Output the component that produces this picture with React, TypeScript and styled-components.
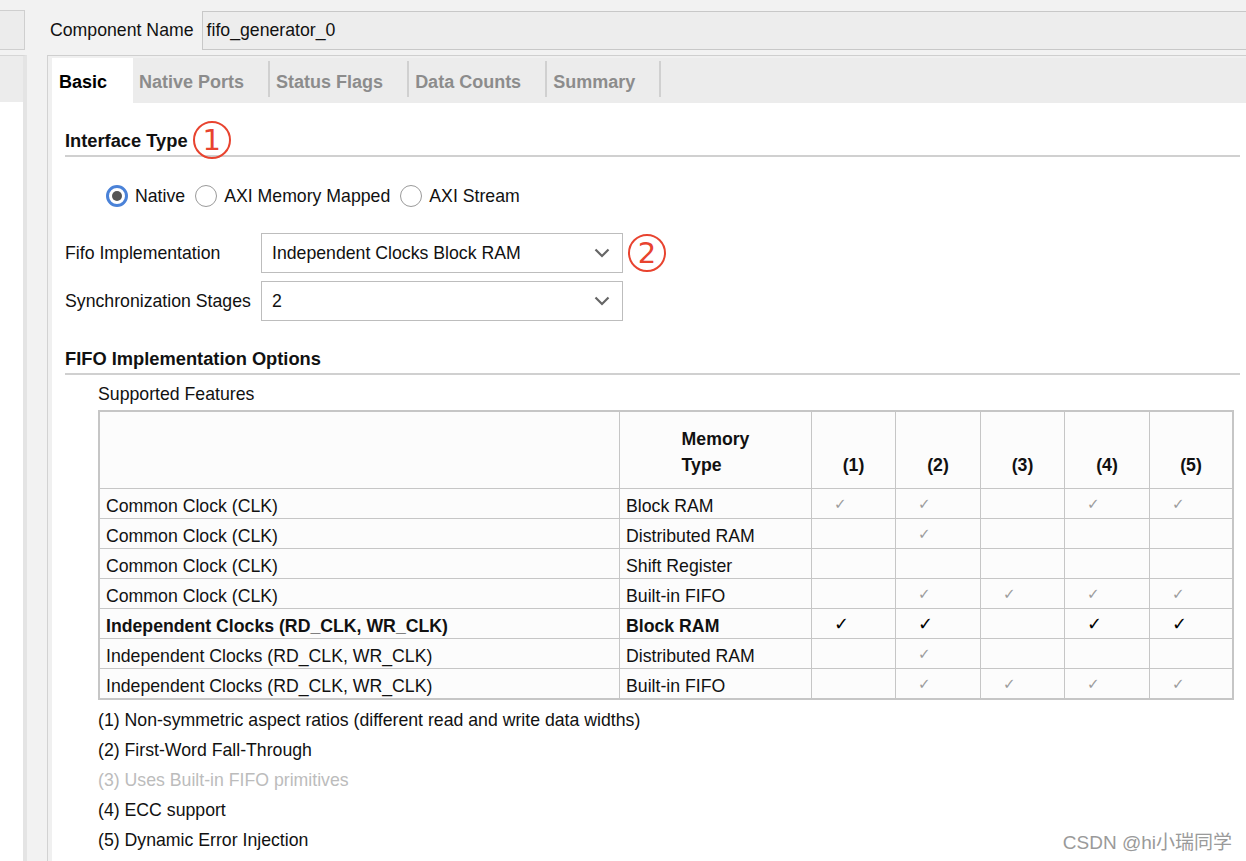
import React from 'react'
import styled, { createGlobalStyle } from 'styled-components'

const GlobalStyle = createGlobalStyle`
  html, body {
    margin: 0;
    padding: 0;
    background: #f2f2f2;
    font-family: "Liberation Sans", Arial, sans-serif;
    color: #111;
  }
`

const Page = styled.div`
  display: flex;
  height: 861px;
  overflow: hidden;
  position: relative;
`

const LeftStrip = styled.div`
  width: 27px;
  display: flex;
  flex-direction: column;
  padding-top: 10px;
  box-sizing: border-box;
`

const LeftTopBox = styled.div`
  height: 40px;
  width: 25px;
  box-sizing: border-box;
  background: #ececec;
  border: 1px solid #cfcfcf;
  border-left: none;
`

const LeftPanel = styled.div`
  flex: 1;
  margin-top: 5px;
  display: flex;
  flex-direction: column;
  border-top: 1px solid #d6d6d6;
  border-right: 4px solid #e4e4e4;
`

const LeftPanelHead = styled.div`
  height: 46px;
  background: #ececec;
`

const LeftPanelBody = styled.div`
  flex: 1;
  background: #fff;
`

const Main = styled.div`
  flex: 1;
  margin-left: 20px;
  display: flex;
  flex-direction: column;
  min-width: 0;
`

const NameRow = styled.div`
  display: flex;
  align-items: center;
  gap: 8px;
  margin-top: 11px;
  padding-left: 3px;
`

const NameLabel = styled.span`
  font-size: 17.7px;
`

const NameInput = styled.div`
  flex: 1;
  height: 39px;
  box-sizing: border-box;
  background: #ededed;
  border: 1px solid #c8c8c8;
  border-right: none;
  display: flex;
  align-items: center;
  padding-left: 4px;
  font-size: 17.7px;
`

const TabPanel = styled.div`
  flex: 1;
  margin-top: 5px;
  border-top: 1px solid #cfcfcf;
  border-left: 1px solid #d2d2d2;
  padding: 2px 0 0 4px;
  background: #f0f0f0;
  display: flex;
  flex-direction: column;
`

const TabBar = styled.div`
  display: flex;
  height: 45px;
  background: #ececec;
`

const Tab = styled.div<{ active?: boolean }>`
  display: flex;
  align-items: center;
  padding: 3px 26px 0 ${p => (p.active ? 7 : 6)}px;
  font-size: 18px;
  font-weight: bold;
  color: ${p => (p.active ? '#000' : '#8c8c8c')};
  background: ${p => (p.active ? '#fff' : 'transparent')};
  position: relative;
  ${p =>
    !p.active &&
    `
    &::after {
      content: '';
      position: absolute;
      right: 0;
      top: 3px;
      bottom: 6px;
      width: 2px;
      background: #d0d0d0;
    }
  `}
`

const Content = styled.div`
  flex: 1;
  background: #fff;
  padding: 0 6px 0 13px;
`

const HeadingRow = styled.div<{ top: number }>`
  display: flex;
  align-items: flex-end;
  height: 36px;
  margin-top: ${p => p.top}px;
  padding-bottom: 3px;
  box-sizing: content-box;
  border-bottom: 2px solid #d0d0d0;
`

const Heading = styled.span`
  font-size: 18.3px;
  font-weight: bold;
  line-height: 22px;
`

const Marker = styled.span<{ drop?: number; left?: number }>`
  width: 34px;
  height: 34px;
  border: 2px solid #e8432f;
  border-radius: 50%;
  color: #e8432f;
  display: inline-flex;
  align-items: center;
  justify-content: center;
  font-size: 29px;
  font-family: "DejaVu Sans", sans-serif;
  line-height: 1;
  margin-bottom: ${p => p.drop ?? 0}px;
  margin-left: ${p => p.left ?? 0}px;
  flex: none;
`

const RadioRow = styled.div`
  display: flex;
  align-items: center;
  gap: 10px;
  margin-top: 27px;
  padding-left: 41px;
  height: 24px;
`

const RadioItem = styled.label`
  display: flex;
  align-items: center;
  gap: 7px;
  font-size: 17.7px;
`

const RadioDot = styled.span<{ checked?: boolean }>`
  width: 22px;
  height: 22px;
  box-sizing: border-box;
  border-radius: 50%;
  background: #fff;
  border: ${p => (p.checked ? '3px solid #4a82d8' : '1px solid #9a9a9a')};
  display: inline-flex;
  align-items: center;
  justify-content: center;
  &::after {
    content: '';
    display: ${p => (p.checked ? 'block' : 'none')};
    width: 10px;
    height: 10px;
    border-radius: 50%;
    background: #555;
  }
`

const FormRow = styled.div<{ top: number }>`
  display: flex;
  align-items: center;
  margin-top: ${p => p.top}px;
  gap: 5px;
`

const FormLabel = styled.span`
  width: 191px;
  font-size: 17.7px;
`

const Select = styled.div`
  width: 362px;
  height: 40px;
  box-sizing: border-box;
  border: 1px solid #bdbdbd;
  background: #fff;
  display: flex;
  align-items: center;
  justify-content: space-between;
  padding: 0 12px 0 10px;
  font-size: 17.7px;
`

const SubTitle = styled.div`
  margin-top: 8px;
  padding-left: 33px;
  font-size: 17.7px;
  line-height: 22px;
`

const Table = styled.table`
  margin: 5px 0 0 33px;
  border-collapse: collapse;
  border: 2px solid #c6c6c6;
  background: #fcfcfc;
  table-layout: fixed;
  font-size: 17.7px;
`

const HeadCell = styled.th<{ w: number }>`
  width: ${p => p.w}px;
  height: 66px;
  border: 1px solid #c6c6c6;
  font-weight: bold;
  vertical-align: bottom;
  padding: 0 0 10px;
  text-align: center;
  line-height: 26px;
`

const StackedHead = styled.span`
  display: inline-block;
  text-align: left;
`

const Cell = styled.td<{ bold?: boolean }>`
  height: 24px;
  border: 1px solid #c6c6c6;
  padding: 5px 0 0 6px;
  font-weight: ${p => (p.bold ? 'bold' : 'normal')};
  white-space: nowrap;
  overflow: hidden;
`

const CheckCell = styled.td`
  height: 29px;
  border: 1px solid #c6c6c6;
  padding: 0 0 0 22px;
`

const Check = styled.span<{ strong?: boolean }>`
  font-family: "DejaVu Sans", sans-serif;
  font-size: ${p => (p.strong ? 18 : 15)}px;
  color: ${p => (p.strong ? '#000' : '#9c9c9c')};
  font-weight: ${p => (p.strong ? 'bold' : 'normal')};
`

const Notes = styled.div`
  margin-top: 5px;
  padding-left: 33px;
  display: flex;
  flex-direction: column;
`

const Note = styled.div<{ muted?: boolean }>`
  font-size: 17.7px;
  line-height: 30px;
  color: ${p => (p.muted ? '#bcbcbc' : '#111')};
`

const Watermark = styled.div`
  position: absolute;
  right: 14px;
  bottom: 7px;
  font-size: 19px;
  color: #9a9a9a;
  font-family: "Liberation Sans", "Noto Sans CJK SC", sans-serif;
`

const Chevron = () => (
  <svg width="16" height="10" viewBox="0 0 16 10">
    <path d="M1.5 1.5 L8 8 L14.5 1.5" fill="none" stroke="#666" strokeWidth="2.2" />
  </svg>
)

type Row = { clock: string; mem: string; bold?: boolean; checks: boolean[] }

const rows: Row[] = [
  { clock: 'Common Clock (CLK)', mem: 'Block RAM', checks: [true, true, false, true, true] },
  { clock: 'Common Clock (CLK)', mem: 'Distributed RAM', checks: [false, true, false, false, false] },
  { clock: 'Common Clock (CLK)', mem: 'Shift Register', checks: [false, false, false, false, false] },
  { clock: 'Common Clock (CLK)', mem: 'Built-in FIFO', checks: [false, true, true, true, true] },
  { clock: 'Independent Clocks (RD_CLK, WR_CLK)', mem: 'Block RAM', bold: true, checks: [true, true, false, true, true] },
  { clock: 'Independent Clocks (RD_CLK, WR_CLK)', mem: 'Distributed RAM', checks: [false, true, false, false, false] },
  { clock: 'Independent Clocks (RD_CLK, WR_CLK)', mem: 'Built-in FIFO', checks: [false, true, true, true, true] },
]

const featureCols = [83, 84, 83, 84, 82]

const tabs = ['Basic', 'Native Ports', 'Status Flags', 'Data Counts', 'Summary']

export default function App() {
  return (
    <Page>
      <GlobalStyle />
      <LeftStrip>
        <LeftTopBox />
        <LeftPanel>
          <LeftPanelHead />
          <LeftPanelBody />
        </LeftPanel>
      </LeftStrip>

      <Main>
        <NameRow>
          <NameLabel>Component Name</NameLabel>
          <NameInput>fifo_generator_0</NameInput>
        </NameRow>

        <TabPanel>
          <TabBar>
            {tabs.map((t, i) => (
              <Tab key={t} active={i === 0}>{t}</Tab>
            ))}
          </TabBar>

          <Content>
            <HeadingRow top={13}>
              <Heading>Interface Type</Heading>
              <Marker drop={-7} left={5}>1</Marker>
            </HeadingRow>

            <RadioRow>
              <RadioItem><RadioDot checked />Native</RadioItem>
              <RadioItem><RadioDot />AXI Memory Mapped</RadioItem>
              <RadioItem><RadioDot />AXI Stream</RadioItem>
            </RadioRow>

            <FormRow top={25}>
              <FormLabel>Fifo Implementation</FormLabel>
              <Select>Independent Clocks Block RAM<Chevron /></Select>
              <Marker>2</Marker>
            </FormRow>
            <FormRow top={8}>
              <FormLabel>Synchronization Stages</FormLabel>
              <Select>2<Chevron /></Select>
            </FormRow>

            <HeadingRow top={13}>
              <Heading>FIFO Implementation Options</Heading>
            </HeadingRow>

            <SubTitle>Supported Features</SubTitle>

            <Table>
              <thead>
                <tr>
                  <HeadCell w={519} />
                  <HeadCell w={191}>
                    <StackedHead>Memory<br />Type</StackedHead>
                  </HeadCell>
                  {featureCols.map((w, i) => (
                    <HeadCell key={i} w={w}>({i + 1})</HeadCell>
                  ))}
                </tr>
              </thead>
              <tbody>
                {rows.map((r, i) => (
                  <tr key={i}>
                    <Cell bold={r.bold}>{r.clock}</Cell>
                    <Cell bold={r.bold}>{r.mem}</Cell>
                    {r.checks.map((c, j) => (
                      <CheckCell key={j}>{c && <Check strong={r.bold}>✓</Check>}</CheckCell>
                    ))}
                  </tr>
                ))}
              </tbody>
            </Table>

            <Notes>
              <Note>(1) Non-symmetric aspect ratios (different read and write data widths)</Note>
              <Note>(2) First-Word Fall-Through</Note>
              <Note muted>(3) Uses Built-in FIFO primitives</Note>
              <Note>(4) ECC support</Note>
              <Note>(5) Dynamic Error Injection</Note>
            </Notes>
          </Content>
        </TabPanel>
      </Main>

      <Watermark>CSDN @hi小瑞同学</Watermark>
    </Page>
  )
}
